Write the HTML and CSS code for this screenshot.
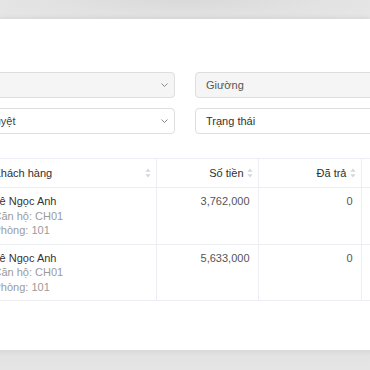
FILE: index.html
```html
<!DOCTYPE html>
<html lang="vi">
<head>
  <meta charset="UTF-8">
  <meta name="viewport" content="width=device-width, initial-scale=1.0">
  <title>Hóa đơn</title>
  <link rel="stylesheet" href="styles.css">
</head>
<body>
  <div class="shade-top"></div>
  <div class="panel">
    <div class="content">
      <div class="filters">
        <div class="select disabled">
          <span class="value">Căn hộ</span>
          <svg class="chev" width="7" height="4" viewBox="0 0 7 4"><polyline points="0.5,0.5 3.5,3.5 6.5,0.5" fill="none" stroke="#8a8a8a" stroke-width="1"/></svg>
        </div>
        <div class="select disabled">
          <span class="value muted">Giường</span>
        </div>
        <div class="select">
          <span class="value shift">Phê duyệt</span>
          <svg class="chev" width="7" height="4" viewBox="0 0 7 4"><polyline points="0.5,0.5 3.5,3.5 6.5,0.5" fill="none" stroke="#8a8a8a" stroke-width="1"/></svg>
        </div>
        <div class="select">
          <span class="value">Trạng thái</span>
        </div>
      </div>

      <table class="grid">
        <colgroup>
          <col class="c-idx"><col class="c-name"><col class="c-num"><col class="c-num2"><col class="c-rest">
        </colgroup>
        <thead>
          <tr>
            <th>#</th>
            <th><div class="th-left"><span>Khách hàng</span><svg class="sort" width="6" height="10" viewBox="0 0 6 10"><path d="M3 0.5 L5.6 3.8 H0.4 Z M3 9.5 L5.6 6.2 H0.4 Z" fill="#d3d6dc"/></svg></div></th>
            <th><div class="th-right"><span>Số tiền</span><svg class="sort" width="6" height="10" viewBox="0 0 6 10"><path d="M3 0.5 L5.6 3.8 H0.4 Z M3 9.5 L5.6 6.2 H0.4 Z" fill="#d3d6dc"/></svg></div></th>
            <th><div class="th-right"><span>Đã trả</span><svg class="sort" width="6" height="10" viewBox="0 0 6 10"><path d="M3 0.5 L5.6 3.8 H0.4 Z M3 9.5 L5.6 6.2 H0.4 Z" fill="#d3d6dc"/></svg></div></th>
            <th><div class="th-right"><span>Còn lại</span></div></th>
          </tr>
        </thead>
        <tbody>
          <tr>
            <td>1</td>
            <td>
              <div class="name">Lê Ngọc Anh</div>
              <div class="sub">Căn hộ: CH01</div>
              <div class="sub">Phòng: 101</div>
            </td>
            <td class="num">3,762,000</td>
            <td class="num">0</td>
            <td class="num">3,762,000</td>
          </tr>
          <tr>
            <td>2</td>
            <td>
              <div class="name">Lê Ngọc Anh</div>
              <div class="sub">Căn hộ: CH01</div>
              <div class="sub">Phòng: 101</div>
            </td>
            <td class="num">5,633,000</td>
            <td class="num">0</td>
            <td class="num">5,633,000</td>
          </tr>
        </tbody>
      </table>
    </div>
  </div>
  <div class="shade-bottom"></div>
</body>
</html>
```

FILE: styles.css
```css
* {margin: 0; padding: 0; box-sizing: border-box;}
body {
  font-family: 'Liberation Sans', Arial, sans-serif;
  font-size: 11px;
  color: #333;
  background: #e4e4e4;
  overflow: hidden;
}
.shade-top {
  height: 19px;
  background: radial-gradient(ellipse 60% 140% at 50% 0%, #d9d9d9 0%, #e2e2e2 60%, #e6e6e6 100%);
}
.panel {
  height: 331px;
  background: #fff;
  overflow: hidden;
  box-shadow: 0 0 6px rgba(0,0,0,0.12);
}
.shade-bottom {
  height: 20px;
  background: linear-gradient(#d9d9d9, #e3e3e3 30%, #e5e5e5);
}
.content {
  margin-left: -50px;
  width: 620px;
}
.filters {
  display: grid;
  grid-template-columns: 225px 225px;
  column-gap: 20px;
  row-gap: 10px;
  padding-top: 53px;
}
.select {
  height: 26px;
  border: 1px solid #dedede;
  border-radius: 4px;
  background: #fff;
  padding: 0 6px 0 10px;
  display: flex;
  align-items: center;
  justify-content: space-between;
}
.select.disabled {
  background: #f5f5f5;
}
.select .value.muted {
  color: #555;
}
.select .value.shift {
  padding-left: 5px;
  color: #444;
}
.disabled .value:first-child:not(.muted) {
  color: transparent;
}
.grid {
  margin-top: 24px;
  border-collapse: collapse;
  table-layout: fixed;
  width: 551px;
}
.c-idx {width: 35px;}
.c-name {width: 171px;}
.c-num {width: 102px;}
.c-num2 {width: 103px;}
.c-rest {width: 140px;}
.grid th, .grid td {
  border: 1px solid #eceef3;
  border-left: none;
}
.grid th + th, .grid td + td {
  border-left: 1px solid #eceef3;
}
.grid th {
  height: 29px;
  font-weight: normal;
  padding: 0 5px 0 8px;
  text-align: left;
  color: #2f2f2f;
}
.th-left {
  display: flex;
  align-items: center;
  justify-content: space-between;
}
.th-right {
  display: flex;
  align-items: center;
  justify-content: flex-end;
  gap: 3px;
}
.grid td {
  padding: 6px 8px;
  line-height: 14.5px;
  vertical-align: top;
  height: 56px;
}
.name {
  color: #333;
}
.sub {
  color: #9b9b9b;
}
.num {
  text-align: right;
  color: #555;
}
```
